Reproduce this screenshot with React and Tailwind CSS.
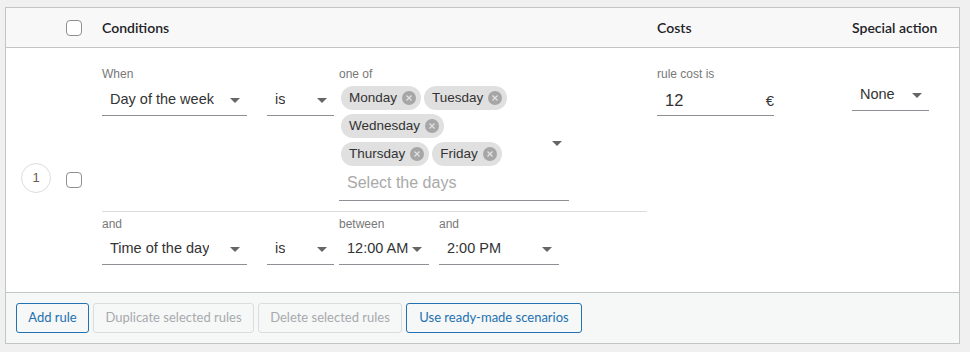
import React from 'react';

const ui = { fontFamily: '"Segoe UI", Lato, "Noto Sans", sans-serif' };
const field = { fontFamily: '"Liberation Sans", Arial, sans-serif' };

const Arrow = () => (
  <svg width="10" height="5" viewBox="0 0 10 5" className="shrink-0">
    <path d="M0 0h10L5 5z" fill="#666" />
  </svg>
);

const Checkbox = () => (
  <div className="w-4 h-4 rounded-[4px] border border-[#8c8f94] bg-white" />
);

const Select = ({ value, width }) => (
  <div
    className="flex items-center justify-between h-[31px] border-b border-[#8c8f94] pl-2 pr-[7px] text-[14.5px] text-[#333] overflow-hidden"
    style={{ width }}
  >
    <span className="whitespace-nowrap overflow-hidden">{value}</span>
    <Arrow />
  </div>
);

const Label = ({ children }) => (
  <div className="h-3 text-[12px] leading-3 text-[#787878]">{children}</div>
);

const Chip = ({ label }) => (
  <div className="flex items-center h-6 rounded-full bg-[#e0e0e0] pl-2 pr-[5px] text-[13.5px] text-[#333]">
    <span>{label}</span>
    <span className="ml-[5px] w-[14px] h-[14px] rounded-full bg-[#a6a6a6] flex items-center justify-center">
      <svg width="6" height="6" viewBox="0 0 6 6">
        <path d="M0.5 0.5l5 5M5.5 0.5l-5 5" stroke="#e0e0e0" strokeWidth="1.4" />
      </svg>
    </span>
  </div>
);

const Button = ({ children, width, disabled }) => (
  <button
    className={`h-[30px] rounded-[3px] border text-[13px] bg-[#f6f7f7] ${
      disabled ? 'border-[#dcdcde] text-[#a7aaad]' : 'border-[#2271b1] text-[#2271b1]'
    }`}
    style={{ width, ...ui }}
  >
    {children}
  </button>
);

export default function App() {
  return (
    <div className="bg-[#f0f0f1] h-[352px] pt-[7px] pl-[5px] pr-[10px]">
      <div className="w-[955px] border border-[#c3c4c7] bg-white">
        {/* Header */}
        <div
          className="flex items-center h-[40px] bg-[#f8f8f8] border-b border-[#c3c4c7] text-[14px] font-semibold text-[#1d2327]"
          style={ui}
        >
          <div className="w-[55px]" />
          <div className="w-[36px] pl-[5px]">
            <Checkbox />
          </div>
          <div className="w-[555px] pl-[5px]">Conditions</div>
          <div className="w-[195px] pl-[5px]">Costs</div>
          <div className="flex-1 pl-[5px]">Special action</div>
        </div>

        {/* Rule row */}
        <div className="flex h-[244px]" style={field}>
          <div className="w-[55px] pt-[115px] pl-[15px]">
            <div className="w-[30px] h-[30px] rounded-full border border-[#dcdcde] flex items-center justify-center text-[13px] text-[#6b5e50]">
              1
            </div>
          </div>
          <div className="w-[36px] pt-[124px] pl-[5px]">
            <Checkbox />
          </div>

          {/* Conditions */}
          <div className="w-[555px] pl-[5px] pr-[5px] pt-5">
            <div className="flex items-start">
              <div className="w-[145px] mr-5">
                <Label>When</Label>
                <div className="mt-[5px]">
                  <Select value="Day of the week" width={145} />
                </div>
              </div>
              <div className="w-[67px] mr-[5px] pt-[17px]">
                <Select value="is" width={67} />
              </div>
              <div className="w-[230px]">
                <Label>one of</Label>
                <div className="mt-[6px] flex border-b border-[#8c8f94]">
                  <div className="flex-1">
                    <div className="w-[186px] pl-[2px] flex flex-wrap gap-x-[3px] gap-y-1">
                      <Chip label="Monday" />
                      <Chip label="Tuesday" />
                      <Chip label="Wednesday" />
                      <Chip label="Thursday" />
                      <Chip label="Friday" />
                    </div>
                    <div className="h-[34px] flex items-center pl-2 text-[16px] text-[#a9a9a9]">
                      Select the days
                    </div>
                  </div>
                  <div className="flex items-center pr-[7px]">
                    <Arrow />
                  </div>
                </div>
              </div>
            </div>

            <div className="mt-[10px] border-t border-[#dcdcde] pt-[6px] flex items-start">
              <div className="w-[145px] mr-5">
                <Label>and</Label>
                <div className="mt-1">
                  <Select value="Time of the day" width={145} />
                </div>
              </div>
              <div className="w-[67px] mr-[5px] pt-4">
                <Select value="is" width={67} />
              </div>
              <div className="w-[90px] mr-[10px]">
                <Label>between</Label>
                <div className="mt-1">
                  <Select value="12:00 AM" width={90} />
                </div>
              </div>
              <div className="w-[120px]">
                <Label>and</Label>
                <div className="mt-1">
                  <Select value="2:00 PM" width={120} />
                </div>
              </div>
            </div>
          </div>

          {/* Costs */}
          <div className="w-[195px] pl-[5px] pt-5">
            <Label>rule cost is</Label>
            <div className="mt-[5px] w-[117px] h-[31px] flex items-center justify-between border-b border-[#8c8f94] pl-2 text-[#333]">
              <span className="text-[16.5px]">12</span>
              <span className="text-[15px] pt-[3px]">€</span>
            </div>
          </div>

          {/* Special action */}
          <div className="flex-1 pl-[5px] pt-[32px]">
            <Select value="None" width={77} />
          </div>
        </div>

        {/* Footer */}
        <div className="h-[51px] border-t border-[#c3c4c7] bg-[#f6f7f7] pt-[10px] pl-[10px] flex items-start gap-1">
          <Button width={73}>Add rule</Button>
          <Button width={161} disabled>Duplicate selected rules</Button>
          <Button width={144} disabled>Delete selected rules</Button>
          <Button width={176}>Use ready-made scenarios</Button>
        </div>
      </div>
    </div>
  );
}
